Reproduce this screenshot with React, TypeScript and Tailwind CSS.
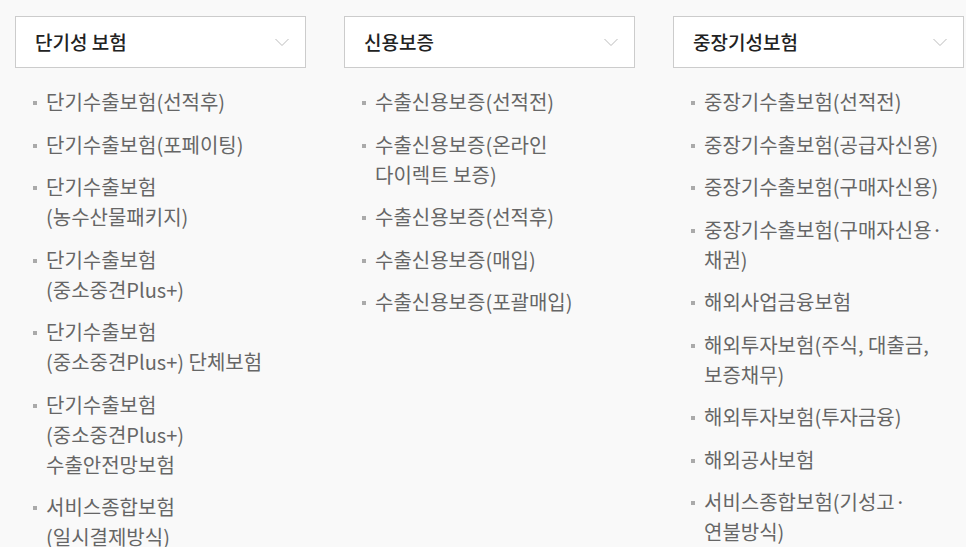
import React from "react";

const cols: { title: string; items: string[][] }[] = [
  {
    title: "단기성 보험",
    items: [
      ["단기수출보험(선적후)"],
      ["단기수출보험(포페이팅)"],
      ["단기수출보험", "(농수산물패키지)"],
      ["단기수출보험", "(중소중견Plus+)"],
      ["단기수출보험", "(중소중견Plus+) 단체보험"],
      ["단기수출보험", "(중소중견Plus+)", "수출안전망보험"],
      ["서비스종합보험", "(일시결제방식)"],
    ],
  },
  {
    title: "신용보증",
    items: [
      ["수출신용보증(선적전)"],
      ["수출신용보증(온라인", "다이렉트 보증)"],
      ["수출신용보증(선적후)"],
      ["수출신용보증(매입)"],
      ["수출신용보증(포괄매입)"],
    ],
  },
  {
    title: "중장기성보험",
    items: [
      ["중장기수출보험(선적전)"],
      ["중장기수출보험(공급자신용)"],
      ["중장기수출보험(구매자신용)"],
      ["중장기수출보험(구매자신용·", "채권)"],
      ["해외사업금융보험"],
      ["해외투자보험(주식, 대출금,", "보증채무)"],
      ["해외투자보험(투자금융)"],
      ["해외공사보험"],
      ["서비스종합보험(기성고·", "연불방식)"],
    ],
  },
];

export default function App() {
  return (
    <div
      className="w-[966px] h-[547px] overflow-hidden bg-[#f9f9f9] pt-[16px] pl-[15px]"
      style={{ fontFamily: '"Noto Sans CJK KR", "Noto Sans", sans-serif' }}
    >
      <div className="flex gap-[38px]">
        {cols.map((c, i) => (
          <div key={i} className="w-[291px] shrink-0">
            <div className="h-[52px] bg-white border border-[#cccccc] flex items-center justify-between pl-[19px] pr-[16px]">
              <span className="text-[19px] font-medium text-[#222222]">{c.title}</span>
              <svg width="14" height="9" viewBox="0 0 14 9" fill="none">
                <path d="M0.5 1 L7 7.5 L13.5 1" stroke="#bbbbbb" strokeWidth="1" />
              </svg>
            </div>
            <ul className="mt-[19px] flex flex-col gap-[12.5px]">
              {c.items.map((lines, j) => (
                <li key={j} className="flex text-[20px] leading-[30px] text-[#666666]">
                  <span className="w-[4px] h-[4px] bg-[#aaaaaa] mt-[14px] ml-[18px] mr-[9px] shrink-0" />
                  <span className="whitespace-nowrap">
                    {lines.map((l, k) => (
                      <span key={k} className="block">{l}</span>
                    ))}
                  </span>
                </li>
              ))}
            </ul>
          </div>
        ))}
      </div>
    </div>
  );
}
